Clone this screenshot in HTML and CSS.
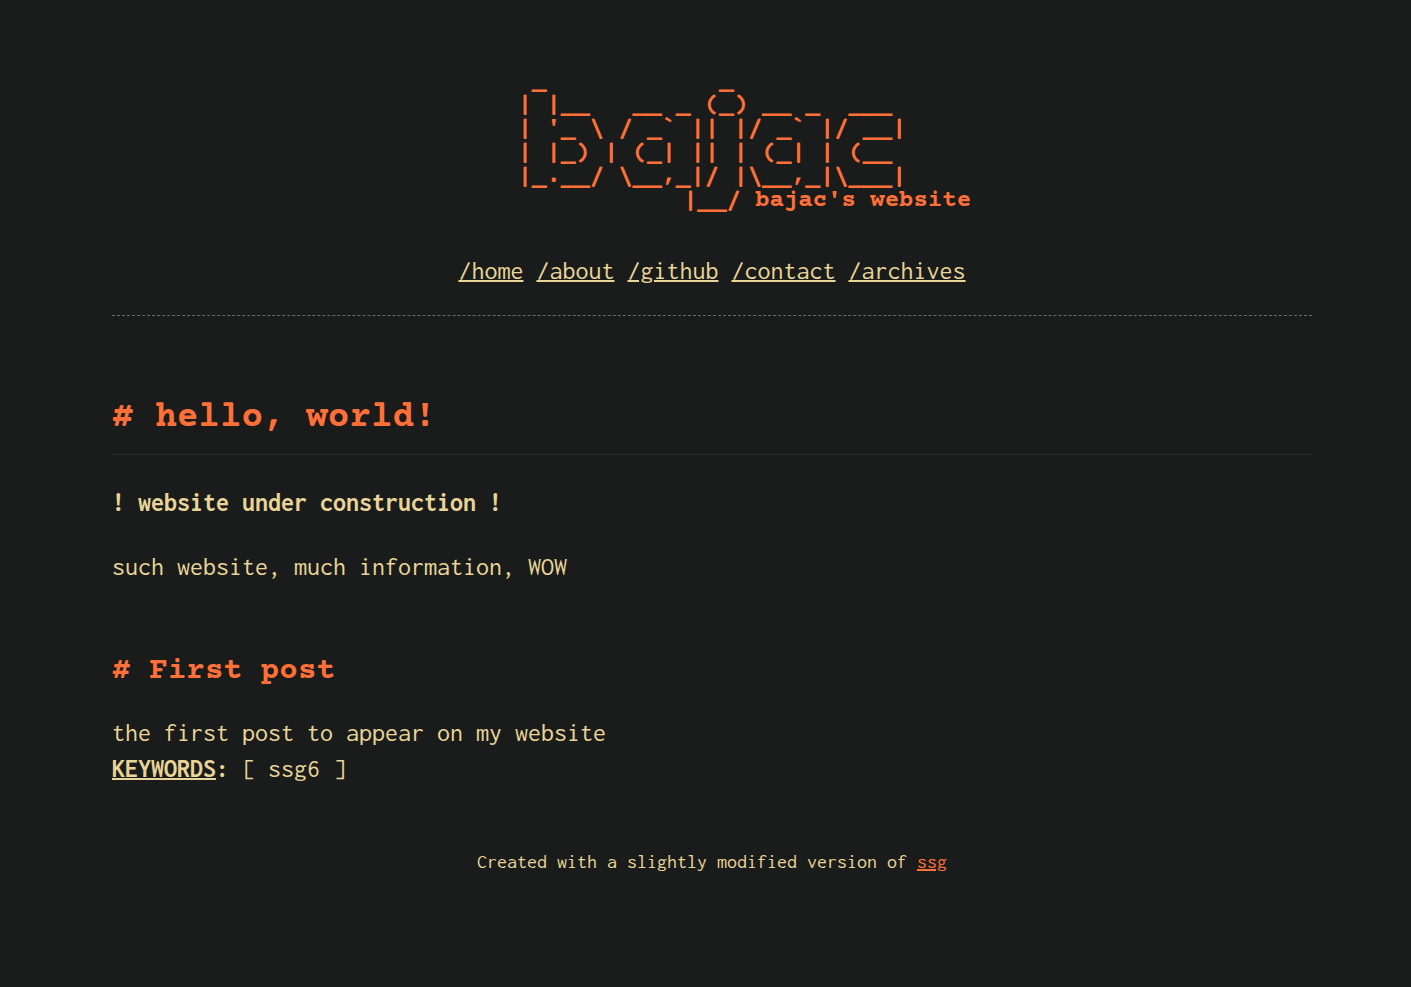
FILE: index.html
```html
<!DOCTYPE html>
<html lang="en">
<head>
<meta charset="utf-8">
<meta name="viewport" content="width=device-width, initial-scale=1">
<title>bajac's website</title>
<link rel="stylesheet" href="styles.css">
</head>
<body>
<header class="site-header">
<pre class="banner"> _            _            
| |__   __ _ (_) __ _  ___ 
| '_ \ / _` || |/ _` |/ __|
| |_) | (_| || | (_| | (__ 
|_.__/ \__,_|/ |\__,_|\___|
                |__/ bajac's website</pre>
<nav class="site-nav">
<a href="#home">/home</a>
<a href="#about">/about</a>
<a href="#github">/github</a>
<a href="#contact">/contact</a>
<a href="#archives">/archives</a>
</nav>
</header>
<main>
<h1 class="title"># hello, world!</h1>
<p class="text"><strong>! website under construction !</strong></p>
<p class="text">such website, much information, WOW</p>
<article>
<h2 class="post-title"># First post</h2>
<p class="text">the first post to appear on my website<br>
<strong><span class="keywords">KEYWORDS</span>:</strong> [ ssg6 ]</p>
</article>
</main>
<footer class="site-footer">Created with a slightly modified version of <a href="#ssg">ssg</a></footer>
</body>
</html>
```
FILE: styles.css
```css
html {
  background: #1a1c1b;
}

body {
  margin: 0;
  padding: 69px 99px 96px 112px;
  color: #e8d597;
  font: 26px/36px Inconsolata, "Liberation Mono", monospace;
}

.site-header {
  padding-bottom: 26px;
  border-bottom: 1px dashed #6b6b6b;
  text-align: center;
}

.banner,
.title,
.post-title {
  color: #ff7038;
  font-family: "Courier 10 Pitch", "Nimbus Mono PS", "Courier Prime", "Liberation Mono", monospace;
  font-weight: bold;
}

.banner {
  margin: 0 0 40px;
  font-size: 24px;
  line-height: 24px;
}

a {
  color: inherit;
  text-decoration-thickness: 2px;
}

.title {
  margin: 71px 0 30px;
  padding-bottom: 4px;
  border-bottom: 1px solid #2b2d2c;
  font-size: 36px;
  line-height: 63px;
}

.text {
  margin: 0 0 28px;
}

.post-title {
  margin: 64px 0 20px;
  font-size: 31px;
  line-height: 46px;
}

.keywords {
  text-decoration: underline 2px;
}

.site-footer {
  margin-top: 57px;
  font-size: 20px;
  text-align: center;
}

.site-footer a {
  color: #ff7038;
}
```
